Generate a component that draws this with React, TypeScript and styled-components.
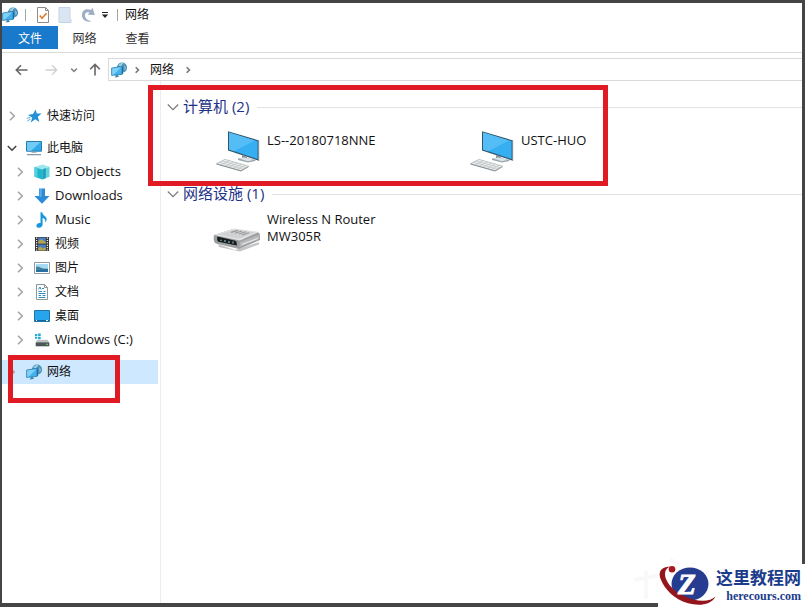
import React from "react";
import styled, { createGlobalStyle, css } from "styled-components";

const GlobalStyle = createGlobalStyle`
  *, *::before, *::after { box-sizing: border-box; }
  body {
    margin: 0;
    background: #fff;
    color: #111;
    font-family: "Open Sans", "Noto Sans CJK SC", sans-serif;
    font-size: 12px;
  }
  button {
    margin: 0;
    padding: 0;
    border: 0;
    background: none;
    color: inherit;
    font: inherit;
    text-align: left;
  }
  svg { display: block; flex: none; }
`;

const Window = styled.div`
  position: relative;
  display: flex;
  flex-direction: column;
  min-height: 100vh;
  border: solid #454545;
  border-width: 3px 3px 4px 2px;
  background: #fff;
`;

const TitleBar = styled.header`
  display: flex;
  align-items: center;
  height: 23px;
`;

const QuickButton = styled.button<{ $width: number }>`
  display: flex;
  align-items: center;
  justify-content: center;
  width: ${(p) => p.$width}px;
  height: 20px;
`;

const Separator = styled.span<{ $space: number }>`
  width: 1px;
  height: 12px;
  margin: 0 ${(p) => p.$space}px;
  background: #a5a5a5;
`;

const Title = styled.h1`
  margin: 0 0 0 2px;
  font-size: 12px;
  font-weight: 400;
  line-height: 20px;
`;

const TabBar = styled.nav`
  display: flex;
  height: 27px;
  padding-bottom: 3px;
  border-bottom: 1px solid #dadada;
`;

const Tab = styled.button<{ $primary?: boolean }>`
  width: ${(p) => (p.$primary ? 56 : 53)}px;
  padding-top: 2px;
  text-align: center;
  line-height: 20px;
  color: #333;
  ${(p) =>
    p.$primary &&
    css`
      background: #1979ca;
      color: #fff;
    `}
`;

const AddressRow = styled.div`
  display: flex;
  align-items: center;
  padding-top: 5px;
`;

const NavButtons = styled.div`
  display: flex;
  align-items: center;
  padding-left: 5px;
`;

const NavButton = styled.button<{ $width: number }>`
  display: flex;
  flex: none;
  align-items: center;
  justify-content: center;
  width: ${(p) => p.$width}px;
  height: 23px;
`;

const AddressBar = styled.div`
  display: flex;
  flex: 1;
  align-items: center;
  height: 23px;
  padding-left: 2px;
  border: 1px solid #d9d9d9;
  border-right: 0;
`;

const Crumb = styled.button`
  padding: 0 4px;
  line-height: 20px;
`;

const CrumbArrow = styled.span`
  display: flex;
  justify-content: center;
  width: 19px;
`;

const Body = styled.div`
  display: flex;
  flex: 1;
`;

const Sidebar = styled.nav`
  display: flex;
  flex: none;
  flex-direction: column;
  gap: 8px;
  width: 159px;
  padding: 23px 2px 0 0;
  border-right: 1px solid #ececec;
`;

const TreeGroup = styled.div`
  position: relative;
  display: flex;
  flex-direction: column;
`;

const TreeRow = styled.button<{ $child?: boolean; $selected?: boolean }>`
  display: flex;
  align-items: center;
  height: 24px;
  padding-left: ${(p) => (p.$child ? 10 : 2)}px;
  background: ${(p) => (p.$selected ? "#cee8ff" : "transparent")};
  white-space: nowrap;
`;

const ArrowSlot = styled.span`
  display: flex;
  justify-content: center;
  width: 16px;
  margin-right: 6px;
`;

const TreeLabel = styled.span<{ $latin?: boolean }>`
  margin-left: 5px;
  padding-bottom: ${(p) => (p.$latin ? 2 : 0)}px;
  font-size: ${(p) => (p.$latin ? 13 : 12)}px;
  line-height: 20px;
`;

const Content = styled.main`
  position: relative;
  flex: 1;
  min-width: 0;
  padding: 14px 0 0 6px;
`;

const Section = styled.section<{ $spaced?: boolean }>`
  padding-bottom: ${(p) => (p.$spaced ? 7 : 0)}px;
`;

const SectionHeader = styled.button`
  display: flex;
  align-items: center;
  width: 100%;
  height: 24px;
  color: #1e3287;
  font-size: 15px;
  line-height: 22px;
  white-space: nowrap;

  &::after {
    content: "";
    flex: 1;
    height: 1px;
    margin-left: 8px;
    background: #e2e2e2;
  }
`;

const SectionTitle = styled.span`
  margin-left: 4px;
  padding-bottom: 2px;
`;

const Tiles = styled.div<{ $spaced?: boolean }>`
  display: grid;
  grid-template-columns: repeat(auto-fill, 254px);
  padding: ${(p) => (p.$spaced ? 8 : 0)}px 0 0 46px;
`;

const Tile = styled.button`
  display: flex;
  align-items: flex-start;
  gap: 6px;
`;

const TileLabel = styled.span`
  padding-top: 5px;
  font-size: 13px;
  line-height: 17px;
  white-space: pre-line;
`;

const Marker = styled.span`
  position: absolute;
  border: 5px solid #e01b24;
  pointer-events: none;
`;

const ComputersMarker = styled(Marker)`
  top: 4px;
  left: -13px;
  width: 460px;
  height: 101px;
`;

const NetworkMarker = styled(Marker)`
  top: -5px;
  left: 6px;
  width: 112px;
  height: 48px;
`;

const Ghost = styled.div`
  position: absolute;
  right: 108px;
  bottom: 0;
`;

const Brand = styled.a`
  position: absolute;
  right: -3px;
  bottom: -4px;
  display: flex;
  justify-content: space-between;
  width: 147px;
  height: 43px;
  padding-right: 5px;
  background: #fff;
  color: #1b3c8c;
  text-decoration: none;
`;

const BrandText = styled.span`
  display: flex;
  flex-direction: column;
  align-items: flex-end;
  padding-top: 2px;
  white-space: nowrap;
`;

const BrandName = styled.span`
  font-family: "Noto Sans CJK SC", sans-serif;
  font-size: 17px;
  font-weight: 700;
  line-height: 22px;
`;

const BrandHost = styled.span`
  font-family: "Liberation Serif", serif;
  font-size: 12px;
  font-weight: 700;
  line-height: 16px;
`;

type ArrowProps = { dir?: "right" | "down"; color?: string; small?: boolean; thin?: boolean };

const Chevron = ({ dir = "right", color = "#a6a6a6", small, thin }: ArrowProps) => {
  const size = small ? 8 : 12;
  return (
    <svg width={size} height={size} viewBox="0 0 12 12" fill="none" stroke={color} strokeWidth={thin ? 1.1 : small ? 2.4 : 1.6}>
      <path d={dir === "right" ? "M4 1.8 8.2 6 4 10.2" : thin ? "M.8 3.5 6 8.7 11.2 3.5" : "M1.8 4 6 8.2 10.2 4"} />
    </svg>
  );
};

const NetworkIcon = () => (
  <svg width="16" height="16" viewBox="0 0 16 16">
    <circle cx="11" cy="5.6" r="5.1" fill="#4c91b9" />
    <path d="M7.2 3.2C9 1 11.4.8 12.4 1.2 11 2.5 10.2 3.6 10.4 5z" fill="#9fd0e2" />
    <path d="M13 3.2c1.6 1 2.2 2 2.3 3.4l-2 2z" fill="#7fb4d2" />
    <path d="m.6 6 10.4-1.6v8L.6 13.4z" fill="#42b1eb" stroke="#2477a7" strokeWidth=".7" />
    <path d="m1.2 6.6 9-1.4-7.6 7.5-1.4.1z" fill="#7fd0f7" />
    <path d="m4.7 13.2 2.3-.2.3 1.4 1.5.4-4.8.6-.2-.6.9-.3z" fill="#3682ac" />
    <path d="m11 4.5 1.1.7v6.8l-1.1.3z" fill="#236d9a" />
  </svg>
);

const StarIcon = () => (
  <svg width="16" height="16" viewBox="0 0 16 16">
    <path d="m9.6 1.4 1.2 4.2 4.8-.1-3.8 3.2 1.6 5.2-4.2-2.6-4.5 3.2 1.5-5L1.8 6.9l5.2-.9z" fill="#2490d8" />
    <path d="m.8 10.4 3.6-1M1.2 13.1l3.2-2" stroke="#5aaedf" />
  </svg>
);

const PcIcon = () => (
  <svg width="16" height="16" viewBox="0 0 16 16">
    <path d="M.5 1.5h15v9.7H.5z" fill="#32aaea" stroke="#237daf" />
    <path d="M1 2h13.6L5.2 10.8H1z" fill="#71cbf5" />
    <path d="M5.5 11.7h5v1h-5z" fill="#8b9ba7" />
    <path d="M1 14h14v1.3H1z" fill="#879baa" />
  </svg>
);

const CubeIcon = () => (
  <svg width="16" height="16" viewBox="0 0 16 16">
    <path d="m.5 3 8-2.5 7 2.2-7.2 2.7z" fill="#9ae8ee" />
    <path d="m.5 3 7.8 2.4v10L.5 12.8z" fill="#20b4cd" />
    <path d="m15.5 2.7-7.2 2.7v10l7.2-2.6z" fill="#65d4df" />
    <path d="m8.3 5.4 3.6-1.3v9.9l-3.6 1.4z" fill="#1fa3bd" />
    <path d="m.5 3 3 1v9.8l-3-1z" fill="#53cfdd" />
  </svg>
);

const DownloadIcon = () => (
  <svg width="16" height="16" viewBox="0 0 16 16">
    <path d="M5 .5h6V8h4.5L8 15.7.5 8H5z" fill="#2b8bd9" />
    <path d="M5.5 1h2.2v8H5.5z" fill="#59abea" />
  </svg>
);

const MusicIcon = () => (
  <svg width="16" height="16" viewBox="0 0 16 16">
    <path d="M6.5.3h1.7c.3 3.3 4.9 4.1 4.5 7.5-.2 1.1-.8 2-1.7 2.8 1-3-.5-4-2.4-4.7v6.7c0 2-1.6 3.2-3.5 3.2-1.7 0-2.7-.8-2.7-2.1 0-2.1 2.2-3.2 4.1-2.7z" fill="#1599dc" />
  </svg>
);

const VideoIcon = () => (
  <svg width="16" height="16" viewBox="0 0 16 16">
    <path d="M1 1h14v14H1z" fill="#303434" />
    <path d="M4.2 1.5h7.6v6H4.2zM4.2 8.5h7.6v6H4.2z" fill="#4a7ec0" />
    <path d="m4.2 5.3 3-2 4.6 2.8v1.4H4.2zM4.2 12l2.2-1.2 2.4 1.7 3-1.2v3.2H4.2z" fill="#b5a44d" />
    <path d="M2.6 1.5v13M13.4 1.5v13" stroke="#f3f3ea" strokeWidth="1.3" strokeDasharray="1.2 1.2" />
  </svg>
);

const PictureIcon = () => (
  <svg width="16" height="16" viewBox="0 0 16 16">
    <path d="M.5 2.5h15v11H.5z" fill="#fff" stroke="#8e9aa3" />
    <path d="M2 4h12v8H2z" fill="#a4daf3" />
    <path d="M2 6.5c3-.4 5 1.4 7 2l5 .3V12H2z" fill="#458199" />
    <path d="M2 10c4 .2 7-1.8 12-.8V12H2z" fill="#286fa2" />
  </svg>
);

const DocumentIcon = () => (
  <svg width="16" height="16" viewBox="0 0 16 16">
    <path d="M2.5.5h8l3 3v12h-11z" fill="#fff" stroke="#8c969b" />
    <path d="M10.5.5v3h3" fill="none" stroke="#8c969b" />
    <path d="M4.5 5.5 6 3l1 2.5M8 4.5h2M4.5 7.5H8M9.5 7.5h2M4.5 9.5h7M4.5 11.5H7M8.5 11.5h3M4.5 13.5h7" fill="none" stroke="#318cc3" />
  </svg>
);

const DesktopIcon = () => (
  <svg width="16" height="16" viewBox="0 0 16 16">
    <path d="M.5 2.5h15v11H.5z" fill="#26a5ec" stroke="#2174aa" />
    <path d="M1 12h14v1H1z" fill="#176899" />
    <path d="M2 12.5h1M12 12.5h2" stroke="#d9f4ff" />
  </svg>
);

const DriveIcon = () => (
  <svg width="16" height="16" viewBox="0 0 16 16">
    <path d="M1 2h2.3v2H1zM4.1 1.5h2.6V4H4.1zM1 4.8h2.3v2H1zM4.1 4.8h2.6v2.4H4.1z" fill="#20acd1" />
    <path d="m3 8 10.5-.2 1.7 2.7H1.8z" fill="#bdc2c3" />
    <path d="M1.7 10.3h13.6v4H1.7z" fill="#4d5557" />
    <path d="M12 12.3h2" stroke="#69e779" />
  </svg>
);

const ComputerIcon = () => (
  <svg width="48" height="48" viewBox="0 0 48 48">
    <path d="m15 4.2 31 9.3v20.3L15 23.5z" fill="#34566b" />
    <path d="m16 5.5 28.6 8.7v17.9L16 22.6z" fill="#35aff2" />
    <path d="M16 5.5 42 13.4 21 24.3l-5-1.7z" fill="#55bdf6" />
    <path d="m45.2 13.4 1 .3V34l-1-.3z" fill="#8da0ab" />
    <path d="m29 28 5 1.7v4.8l-5-1.5z" fill="#88949c" />
    <path d="m25 31.6 6-1.2 11.4 2.4v1.2l-7.4 1.6-10-2.6z" fill="#9ba6ad" />
    <path d="m26 31.4 5-.9 10 2.3-6 1.5z" fill="#dde3e6" />
    <path d="m3.5 36.6 8.5-4.2 23.6 6.8-7.6 4.4z" fill="#f0f2f2" stroke="#a9afb2" strokeWidth=".7" />
    <path d="m6.4 35.2 24.1 7M9 33.9l24.1 6.8M8 37.8l8.5-4.2M12 39l8.5-4.1M16 40.2l8.5-4.2M20 41.4l8.5-4.3M24 42.6l8.2-4.5" fill="none" stroke="#aeb5b8" strokeWidth=".6" />
    <path d="m3.5 36.6 24.5 7 7.6-4.4v.9L28 44.6 3.5 37.5z" fill="#858d91" />
  </svg>
);

const RouterIcon = () => (
  <svg width="48" height="48" viewBox="0 0 48 48">
    <path d="M5 38 22 44l24-8v2.5L27 45.5 6 41z" fill="#c5c5c5" />
    <path d="m1 29 19-6 24 3c2.4.5 3 2 3 4v4L26 43 3 37.5C.5 36 .3 33 1 29z" fill="#9c9e9f" />
    <path d="m1 29 20-6.5L46 26l-19 8.5z" fill="#e2e3e3" />
    <path d="m5 28.5 17-4.9 20 3-16 6.2z" fill="#cfd1d2" />
    <path d="m18 26.4 7-2M22 27.2l7-2.2M26 28l7-2.2M29 29l7-2.3" stroke="#999c9f" strokeWidth="1.2" />
    <path d="m4.4 30.6 17 3.8c2 .4 2.6 1.5 2.4 5L5.5 35.8c-1.3-.6-1.8-2.8-1.1-5.2z" fill="#171c1f" />
    <path d="M8 35v-1.3M12 36v-2M16 37v-2M20 37.6v-2" stroke="#8bb6ba" strokeWidth="1.2" />
    <path d="m27 36 19.5-7.5v4.2L26.5 41z" fill="#b6b9bb" />
    <path d="m29 38.4 16-6" stroke="#efefef" />
  </svg>
);

const BrandMark = () => (
  <svg width="58" height="43" viewBox="0 0 58 43">
    <ellipse cx="32" cy="20" rx="18.5" ry="16.5" fill="#263c90" />
    <path d="M12 2.6C2 3 .2 9 2.6 15 6.500 25 16 35.500 30 39.300c9.500 2.500 22.500 2.700 27.500-6.800-4.500 4.500-13 5.200-22 3C22 32 11.500 24 8 15 6 9.500 7 5.200 12 2.600z" fill="#93161c" />
    <circle cx="14" cy="5.3" r="3.3" fill="#a8191f" />
    <text x="20" y="30" fill="#fff" stroke="#fff" strokeWidth="1" fontFamily="Liberation Serif, serif" fontSize="29" fontWeight="700" fontStyle="italic">Z</text>
  </svg>
);

const places: { label: string; icon: React.ReactNode; latin?: boolean }[] = [
  { label: "3D Objects", icon: <CubeIcon />, latin: true },
  { label: "Downloads", icon: <DownloadIcon />, latin: true },
  { label: "Music", icon: <MusicIcon />, latin: true },
  { label: "视频", icon: <VideoIcon /> },
  { label: "图片", icon: <PictureIcon /> },
  { label: "文档", icon: <DocumentIcon /> },
  { label: "桌面", icon: <DesktopIcon /> },
  { label: "Windows (C:)", icon: <DriveIcon />, latin: true },
];

export default function App() {
  return (
    <>
      <GlobalStyle />
      <Window>
        <TitleBar>
          <QuickButton $width={16} aria-label="网络"><NetworkIcon /></QuickButton>
          <Separator $space={7} />
          <QuickButton $width={20} aria-label="属性">
            <svg width="14" height="16" viewBox="0 0 14 16" fill="none">
              <path d="M1.5.5h8l3 3v12h-11z" fill="#fff" stroke="#8c8c8c" />
              <path d="M9.5.5v3h3" stroke="#8c8c8c" />
              <path d="m3.8 8.5 2.2 2.7 4.5-5" stroke="#df7d2d" strokeWidth="1.7" />
            </svg>
          </QuickButton>
          <QuickButton $width={24} aria-label="新建文件夹">
            <svg width="14" height="16" viewBox="0 0 14 16">
              <path d="M1 .5h11v11l1 1v3H1z" fill="#d9e5f3" stroke="#c4d3e5" />
            </svg>
          </QuickButton>
          <QuickButton $width={21} aria-label="恢复">
            <svg width="16" height="16" viewBox="0 0 16 16">
              <path d="M11.5 14.500C5 15.500 1.500 12 2 7.300 2.400 3 6.800 1 10.800 3L12.500.8 14.800 8 7.700 7.800l1.800-2.300C7 4.600 5.200 5.500 5 8c-.2 3 2.200 5.200 6.500 6.500z" fill="#9daec5" />
            </svg>
          </QuickButton>
          <QuickButton $width={14} aria-label="自定义快速访问工具栏">
            <svg width="8" height="8" viewBox="0 0 8 8"><path d="M1 1h6v1H1zM.8 3.500h6.400L4 7z" fill="#222" /></svg>
          </QuickButton>
          <Separator $space={5} />
          <Title>网络</Title>
        </TitleBar>
        <TabBar>
          <Tab $primary>文件</Tab>
          <Tab>网络</Tab>
          <Tab>查看</Tab>
        </TabBar>
        <AddressRow>
          <NavButtons>
            <NavButton $width={28} aria-label="后退">
              <svg width="13" height="12" viewBox="0 0 13 12" fill="none" stroke="#666" strokeWidth="1.6"><path d="M12.5 6H1.5M6 1.2 1.3 6 6 10.8" /></svg>
            </NavButton>
            <NavButton $width={32} aria-label="前进">
              <svg width="13" height="12" viewBox="0 0 13 12" fill="none" stroke="#d0d0d0" strokeWidth="1.4"><path d="M.5 6h11M7 1.2 11.7 6 7 10.8" /></svg>
            </NavButton>
            <NavButton $width={14} aria-label="最近浏览的位置"><Chevron dir="down" color="#858585" small /></NavButton>
            <NavButton $width={27} aria-label="上移">
              <svg width="12" height="13" viewBox="0 0 12 13" fill="none" stroke="#666" strokeWidth="1.6"><path d="M6 12.5v-11M1.2 6.2 6 1.4l4.8 4.8" /></svg>
            </NavButton>
          </NavButtons>
          <AddressBar>
            <NetworkIcon />
            <CrumbArrow><Chevron color="#777" small /></CrumbArrow>
            <Crumb>网络</Crumb>
            <CrumbArrow><Chevron color="#777" small /></CrumbArrow>
          </AddressBar>
        </AddressRow>
        <Body>
          <Sidebar>
            <TreeGroup>
              <TreeRow><ArrowSlot><Chevron /></ArrowSlot><StarIcon /><TreeLabel>快速访问</TreeLabel></TreeRow>
            </TreeGroup>
            <TreeGroup>
              <TreeRow><ArrowSlot><Chevron dir="down" color="#444" /></ArrowSlot><PcIcon /><TreeLabel>此电脑</TreeLabel></TreeRow>
              {places.map((place) => (
                <TreeRow key={place.label} $child>
                  <ArrowSlot><Chevron /></ArrowSlot>
                  {place.icon}
                  <TreeLabel $latin={place.latin}>{place.label}</TreeLabel>
                </TreeRow>
              ))}
            </TreeGroup>
            <TreeGroup>
              <TreeRow $selected><ArrowSlot><Chevron /></ArrowSlot><NetworkIcon /><TreeLabel>网络</TreeLabel></TreeRow>
              <NetworkMarker />
            </TreeGroup>
          </Sidebar>
          <Content>
            <Section $spaced>
              <SectionHeader><Chevron dir="down" color="#777" thin /><SectionTitle>计算机 (2)</SectionTitle></SectionHeader>
              <Tiles $spaced>
                <Tile><ComputerIcon /><TileLabel>LS--20180718NNE</TileLabel></Tile>
                <Tile><ComputerIcon /><TileLabel>USTC-HUO</TileLabel></Tile>
              </Tiles>
            </Section>
            <Section>
              <SectionHeader><Chevron dir="down" color="#777" thin /><SectionTitle>网络设施 (1)</SectionTitle></SectionHeader>
              <Tiles>
                <Tile><RouterIcon /><TileLabel>{"Wireless N Router\nMW305R"}</TileLabel></Tile>
              </Tiles>
            </Section>
            <ComputersMarker />
          </Content>
        </Body>
        <Ghost aria-hidden="true">
          <svg width="62" height="50" viewBox="0 0 62 50" fill="none" stroke="#f9f9f9" strokeWidth="4">
            <path d="M2 27l26-5M14 18v28M38 6l18 14M24 32h14v14" />
          </svg>
        </Ghost>
        <Brand href="#">
          <BrandMark />
          <BrandText>
            <BrandName>这里教程网</BrandName>
            <BrandHost>herecours.com</BrandHost>
          </BrandText>
        </Brand>
      </Window>
    </>
  );
}
